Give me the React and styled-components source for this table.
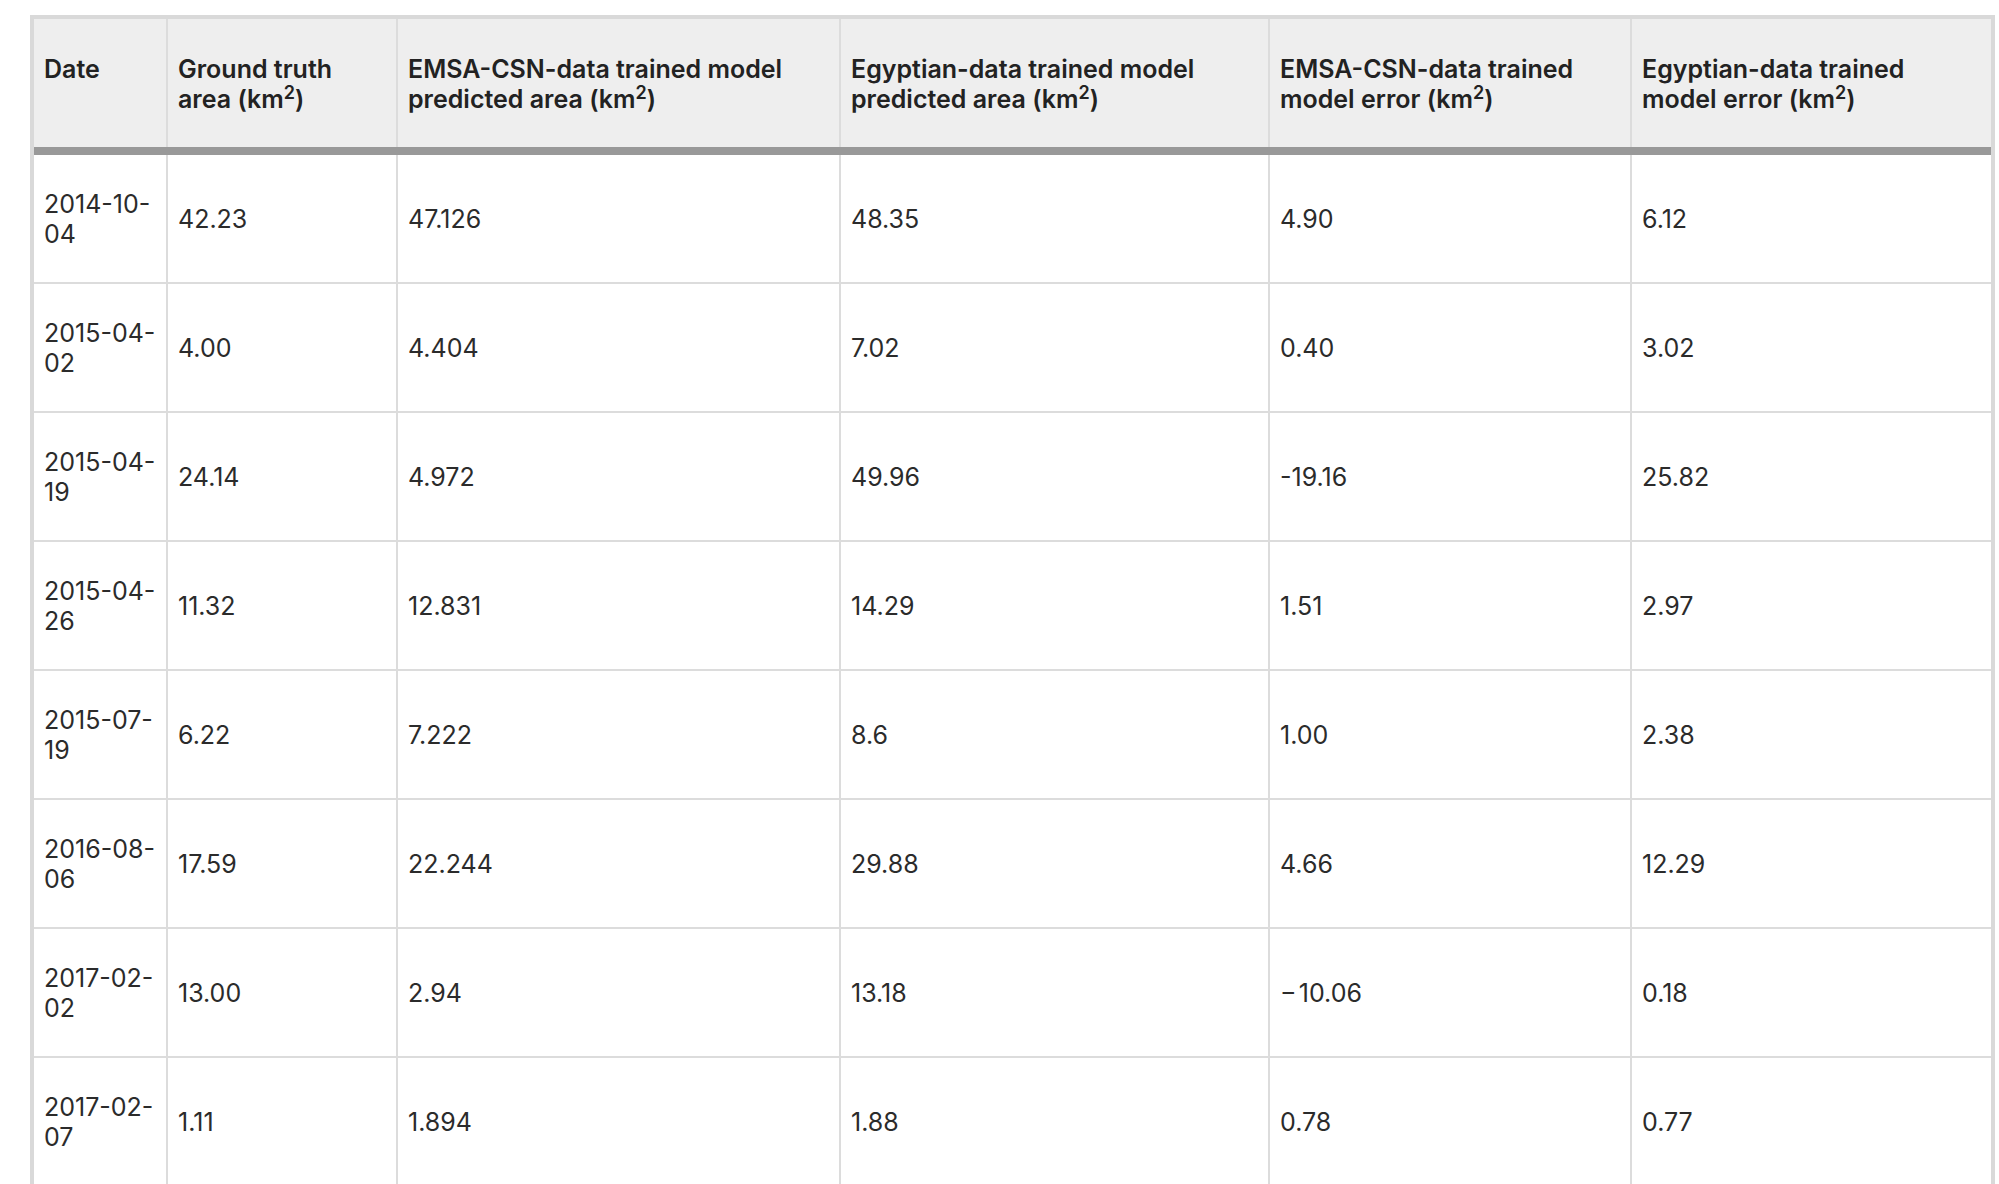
import React from 'react';
import styled, { createGlobalStyle } from 'styled-components';

const GlobalStyle = createGlobalStyle`
  html, body {
    margin: 0;
    padding: 0;
    background: #fff;
  }
  body {
    font-family: Inter, "Noto Sans", "Liberation Sans", sans-serif;
    color: #222;
  }
`;

const Page = styled.div`
  padding: 15px 4px 0 30px;
`;

const Table = styled.table`
  width: 1965px;
  table-layout: fixed;
  border-collapse: separate;
  border-spacing: 0;
  border: 4px solid #d9d9d9;
  border-bottom: none;
  font-size: 25px;
  line-height: 30px;
`;

// divider drawn as inset shadow so the thick grey rule stays unbroken
const HeadCell = styled.th`
  background: #eeeeee;
  font-weight: 600;
  text-align: left;
  vertical-align: top;
  padding: 35px 10px 33px;
  color: #222;
  box-shadow: ${(p) => (p.$last ? 'none' : 'inset -2px 0 0 #dcdcdc')};
  border-bottom: 8px solid #999;
`;

const Cell = styled.td`
  height: 127px;
  padding: 0 10px;
  vertical-align: middle;
  color: #2b2b2b;
  border-right: ${(p) => (p.$last ? 'none' : '2px solid #dcdcdc')};
  border-bottom: 2px solid #dcdcdc;
`;

const Sup = styled.sup`
  font-size: 0.72em;
  line-height: 0;
  vertical-align: 0.5em;
`;

const widths = [134, 230, 443, 429, 362, 359];

const Km = () => (
  <>
    (km<Sup>2</Sup>)
  </>
);

const headers = [
  <>Date</>,
  <>Ground truth area <Km /></>,
  <>EMSA-CSN-data trained model predicted area <Km /></>,
  <>Egyptian-data trained model predicted area <Km /></>,
  <>EMSA-CSN-data trained model error <Km /></>,
  <>Egyptian-data trained model error <Km /></>,
];

const rows = [
  ['2014-10-04', '42.23', '47.126', '48.35', '4.90', '6.12'],
  ['2015-04-02', '4.00', '4.404', '7.02', '0.40', '3.02'],
  ['2015-04-19', '24.14', '4.972', '49.96', '-19.16', '25.82'],
  ['2015-04-26', '11.32', '12.831', '14.29', '1.51', '2.97'],
  ['2015-07-19', '6.22', '7.222', '8.6', '1.00', '2.38'],
  ['2016-08-06', '17.59', '22.244', '29.88', '4.66', '12.29'],
  ['2017-02-02', '13.00', '2.94', '13.18', '\u2212\u200a10.06', '0.18'],
  ['2017-02-07', '1.11', '1.894', '1.88', '0.78', '0.77'],
];

// date wraps after the second hyphen, like the source table
const DateText = ({ value }) => (
  <>
    {value.slice(0, 8)}
    <wbr />
    {value.slice(8)}
  </>
);

export default function App() {
  const lastCol = widths.length - 1;
  return (
    <Page>
      <GlobalStyle />
      <Table>
        <colgroup>
          {widths.map((w, i) => (
            <col key={i} style={{ width: w }} />
          ))}
        </colgroup>
        <thead>
          <tr>
            {headers.map((h, i) => (
              <HeadCell key={i} $last={i === lastCol}>
                {h}
              </HeadCell>
            ))}
          </tr>
        </thead>
        <tbody>
          {rows.map((row, r) => (
            <tr key={r}>
              {row.map((v, c) => (
                <Cell key={c} $last={c === lastCol}>
                  {c === 0 ? <DateText value={v} /> : v}
                </Cell>
              ))}
            </tr>
          ))}
        </tbody>
      </Table>
    </Page>
  );
}
